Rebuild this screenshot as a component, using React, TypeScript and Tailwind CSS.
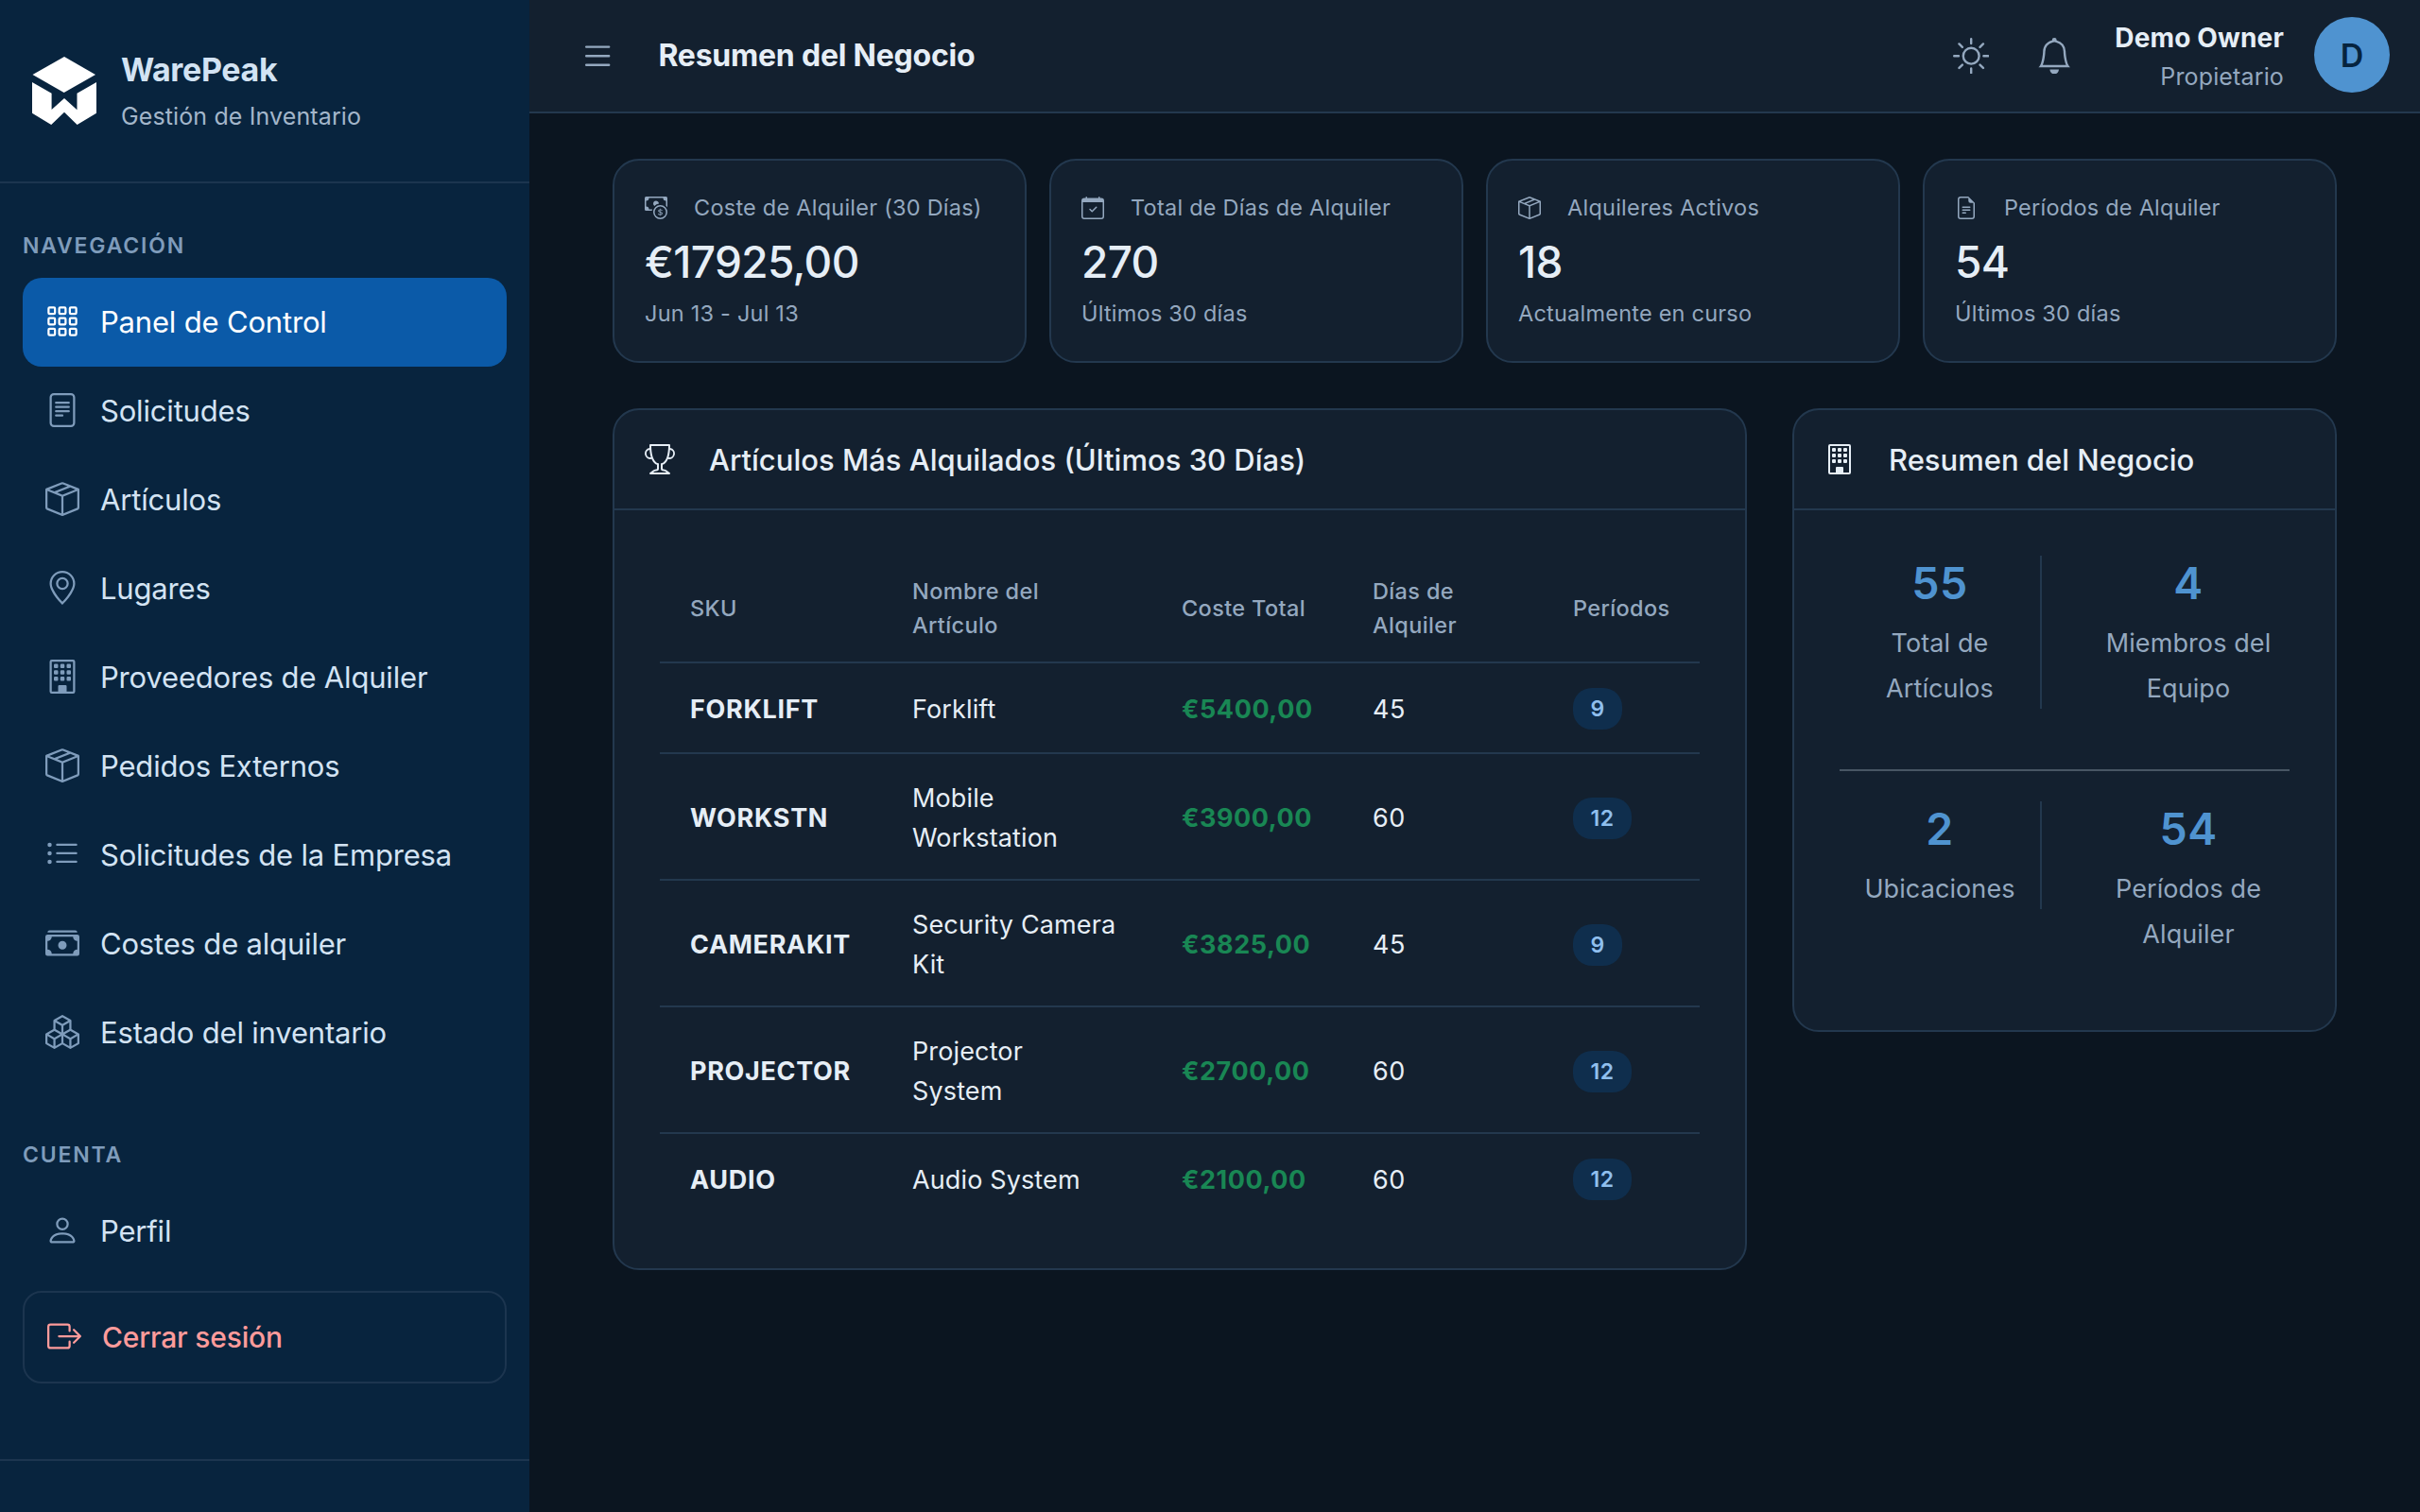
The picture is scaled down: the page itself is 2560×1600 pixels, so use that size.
import type { IconType } from "react-icons";
import {
    BsBell,
    BsBoxArrowRight,
    BsBoxes,
    BsBoxSeam,
    BsBuilding,
    BsCalendarCheck,
    BsCashCoin,
    BsCashStack,
    BsFileEarmarkText,
    BsFileText,
    BsGeoAlt,
    BsGrid3X3Gap,
    BsList,
    BsListUl,
    BsPerson,
    BsSun,
    BsTrophy,
} from "react-icons/bs";

interface NavEntry {
    label: string;
    icon: IconType;
    active?: boolean;
}

interface Stat {
    label: string;
    value: string;
    hint: string;
    icon: IconType;
}

interface RentedItem {
    sku: string;
    name: string;
    cost: string;
    days: number;
    periods: number;
}

const navEntries: NavEntry[] = [
    { label: "Panel de Control", icon: BsGrid3X3Gap, active: true },
    { label: "Solicitudes", icon: BsFileText },
    { label: "Artículos", icon: BsBoxSeam },
    { label: "Lugares", icon: BsGeoAlt },
    { label: "Proveedores de Alquiler", icon: BsBuilding },
    { label: "Pedidos Externos", icon: BsBoxSeam },
    { label: "Solicitudes de la Empresa", icon: BsListUl },
    { label: "Costes de alquiler", icon: BsCashStack },
    { label: "Estado del inventario", icon: BsBoxes },
];

const stats: Stat[] = [
    { label: "Coste de Alquiler (30 Días)", value: "€17925,00", hint: "Jun 13 - Jul 13", icon: BsCashCoin },
    { label: "Total de Días de Alquiler", value: "270", hint: "Últimos 30 días", icon: BsCalendarCheck },
    { label: "Alquileres Activos", value: "18", hint: "Actualmente en curso", icon: BsBoxSeam },
    { label: "Períodos de Alquiler", value: "54", hint: "Últimos 30 días", icon: BsFileEarmarkText },
];

const items: RentedItem[] = [
    { sku: "FORKLIFT", name: "Forklift", cost: "€5400,00", days: 45, periods: 9 },
    { sku: "WORKSTN", name: "Mobile\nWorkstation", cost: "€3900,00", days: 60, periods: 12 },
    { sku: "CAMERAKIT", name: "Security Camera\nKit", cost: "€3825,00", days: 45, periods: 9 },
    { sku: "PROJECTOR", name: "Projector\nSystem", cost: "€2700,00", days: 60, periods: 12 },
    { sku: "AUDIO", name: "Audio System", cost: "€2100,00", days: 60, periods: 12 },
];

function Logo() {
    return (
        <svg viewBox="0 0 68 72" className="h-[72px] w-[68px] shrink-0 fill-white">
            <path d="M34 0 67 19 33.7 38 .5 19Z" />
            <path d="M0 27 20.6 38.7V56L34 44 47.5 56.3V38.7L68 27V59.7L47.6 72 34 58.7 20.2 72 0 59.7Z" />
        </svg>
    );
}

function NavItem({ label, icon: Icon, active }: NavEntry) {
    return (
        <a
            className={`flex h-[94px] items-center gap-[22px] rounded-[20px] pl-6 text-[31px] tracking-[-0.18px] ${
                active ? "bg-[#0b5aa8] text-white" : "text-[#d3e3f3]"
            }`}
        >
            <Icon size={36} className={active ? "mb-0.5 text-white" : "mb-0.5 text-[#7f9cbb]"} />
            {label}
        </a>
    );
}

function Sidebar() {
    return (
        <aside className="flex h-[1600px] w-[560px] shrink-0 flex-col bg-[#08243e]">
            <div className="flex h-[194px] items-center gap-[26px] border-b-2 border-[#1c354f] pl-[34px]">
                <Logo />
                <div className="mb-1">
                    <div className="text-[34px] leading-[53px] font-bold tracking-[-0.35px] text-[#d3e3f3]">WarePeak</div>
                    <div className="mt-1 text-[25px] leading-[38px] tracking-[0.12px] text-[#a3b6ca]">Gestión de Inventario</div>
                </div>
            </div>
            <nav className="flex-1 px-6 pt-12">
                <h6 className="mb-4 text-[23px] leading-9 font-semibold tracking-[1.8px] text-[#7f9cbb]">NAVEGACIÓN</h6>
                {navEntries.map(entry => (
                    <NavItem key={entry.label} {...entry} />
                ))}
                <h6 className="mt-16 mb-4 text-[23px] leading-9 font-semibold tracking-[1.8px] text-[#7f9cbb]">CUENTA</h6>
                <NavItem label="Perfil" icon={BsPerson} />
                <button className="mt-4 flex h-[98px] w-full items-center gap-[22px] rounded-[20px] border-2 border-[#1c354f] pl-6 text-[30px] font-medium tracking-[-0.2px] text-[#ff9b9b]">
                    <BsBoxArrowRight size={36} className="mb-0.5" />
                    Cerrar sesión
                </button>
            </nav>
            <div className="h-14 border-t-2 border-[#1c354f]" />
        </aside>
    );
}

function TopBar() {
    return (
        <header className="flex h-[120px] items-center border-b-2 border-[#23384e] bg-[#13202f] pr-8 pl-[53px]">
            <BsList className="size-[38.4px] text-[#94a8bf]" />
            <h1 className="ml-[45px] text-[32px] font-bold tracking-[-0.22px] text-[#e6eef6]">Resumen del Negocio</h1>
            <div className="ml-auto flex items-center">
                <BsSun className="size-[38.4px] text-[#94a8bf]" />
                <BsBell className="ml-[49.6px] size-[38.4px] text-[#94a8bf]" />
                <div className="ml-[45px] text-right">
                    <div className="text-[28px] leading-[43px] font-bold tracking-[0.15px] text-[#e6eef6]">Demo Owner</div>
                    <div className="text-[25px] leading-[38px] tracking-[0.15px] text-[#94a8bf]">Propietario</div>
                </div>
                <div className="mb-0.5 ml-8 flex size-20 items-center justify-center rounded-full bg-[#4f93d0] text-[34px] font-semibold text-[#06243f]">
                    D
                </div>
            </div>
        </header>
    );
}

function StatCard({ label, value, hint, icon: Icon }: Stat) {
    return (
        <div className="h-[216px] rounded-[28px] border-2 border-[#23384e] bg-[#13202f] p-8 text-[#94a8bf]">
            <div className="flex items-center gap-7 text-[23.5px] leading-9 tracking-[0.24px]">
                <Icon size={24} />
                {label}
            </div>
            <div className="mt-2.5 text-[46px] leading-[58px] font-medium tracking-[-0.65px] text-[#e6eef6]">{value}</div>
            <div className="mt-2 text-[23.5px] leading-9 tracking-[0.22px]">{hint}</div>
        </div>
    );
}

function PanelHeader({ title, icon: Icon }: { title: string; icon: IconType }) {
    return (
        <div className="flex h-[106px] items-center gap-9 border-b-2 border-[#23384e] pl-8 text-[31px] font-medium text-[#e6eef6]">
            <Icon size={32} />
            <span className="pt-0.5">{title}</span>
        </div>
    );
}

function RentedTable() {
    return (
        <table className="w-full table-fixed border-separate border-spacing-0 text-left">
            <colgroup>
                <col className="w-[235px]" />
                <col className="w-[285px]" />
                <col className="w-[202px]" />
                <col className="w-[212px]" />
                <col className="w-[166px]" />
            </colgroup>
            <thead>
                <tr className="text-[23.5px] leading-9 tracking-[0.36px] text-[#94a8bf]">
                    {["SKU", "Nombre del Artículo", "Coste Total", "Días de Alquiler", "Períodos"].map((title, i) => (
                        <th key={title} className={`h-[114px] border-b-2 border-[#23384e] font-medium ${i === 4 ? "pl-8" : "px-8"}`}>
                            {title}
                        </th>
                    ))}
                </tr>
            </thead>
            <tbody className="[&>tr:last-child]:h-[94px] [&>tr:last-child>td]:border-b-0">
                {items.map(item => (
                    <tr
                        key={item.sku}
                        className={`text-[27px] leading-[42px] text-[#e6eef6] [&>td]:border-b-2 [&>td]:border-[#23384e] [&>td]:px-8 ${
                            item.name.includes("\n") ? "h-[134px] [&>td]:pt-1" : "h-[96px] [&>td]:pt-[3px]"
                        }`}
                    >
                        <td className="font-bold tracking-[0.68px]">{item.sku}</td>
                        <td className="tracking-[0.13px] whitespace-pre">{item.name}</td>
                        <td className="font-bold tracking-[0.55px] text-[#198754]">{item.cost}</td>
                        <td className="tracking-[0.6px]">{item.days}</td>
                        <td>
                            <span className="mb-px flex h-11 w-fit items-center rounded-[20px] bg-[#0f2e4d] px-[18.5px] text-[23px] font-semibold tracking-[0.5px] text-[#8fbfee]">
                                {item.periods}
                            </span>
                        </td>
                    </tr>
                ))}
            </tbody>
        </table>
    );
}

function Total({ value, label, divider }: { value: number; label: string; divider?: boolean }) {
    const twoLines = label.includes("\n");
    return (
        <div className={`pt-px text-center ${twoLines ? "h-[162px]" : "h-[114px]"} ${divider ? "border-r-2 border-[#23384e]" : ""}`}>
            <div className="text-[46.5px] leading-[57px] font-semibold tracking-[0.4px] text-[#4f93d0]">{value}</div>
            <div className="mt-[11px] text-[27px] leading-[47.5px] tracking-[0.1px] whitespace-pre-line text-[#94a8bf]">{label}</div>
        </div>
    );
}

export default function App() {
    return (
        <div className="flex h-[1600px] w-[2560px] overflow-hidden bg-[#0b1520] font-['Inter',sans-serif]">
            <Sidebar />
            <div className="flex-1">
                <TopBar />
                <main className="px-[88px] pt-12">
                    <div className="grid grid-cols-4 gap-6">
                        {stats.map(stat => (
                            <StatCard key={stat.label} {...stat} />
                        ))}
                    </div>
                    <div className="mt-12 flex items-start gap-12">
                        <section className="w-[1200px] rounded-[28px] border-2 border-[#23384e] bg-[#13202f]">
                            <PanelHeader title="Artículos Más Alquilados (Últimos 30 Días)" icon={BsTrophy} />
                            <div className="p-12">
                                <RentedTable />
                            </div>
                        </section>
                        <section className="h-[660px] w-[576px] rounded-[28px] border-2 border-[#23384e] bg-[#13202f]">
                            <PanelHeader title="Resumen del Negocio" icon={BsBuilding} />
                            <div className="p-12">
                                <div className="grid grid-cols-2 items-start gap-12">
                                    <Total value={55} label={"Total de\nArtículos"} divider />
                                    <Total value={4} label={"Miembros del\nEquipo"} />
                                </div>
                                <hr className="mt-16 mb-8 border-t-2 border-[#485664]" />
                                <div className="grid grid-cols-2 items-start gap-12">
                                    <Total value={2} label="Ubicaciones" divider />
                                    <Total value={54} label={"Períodos de\nAlquiler"} />
                                </div>
                            </div>
                        </section>
                    </div>
                </main>
            </div>
        </div>
    );
}
